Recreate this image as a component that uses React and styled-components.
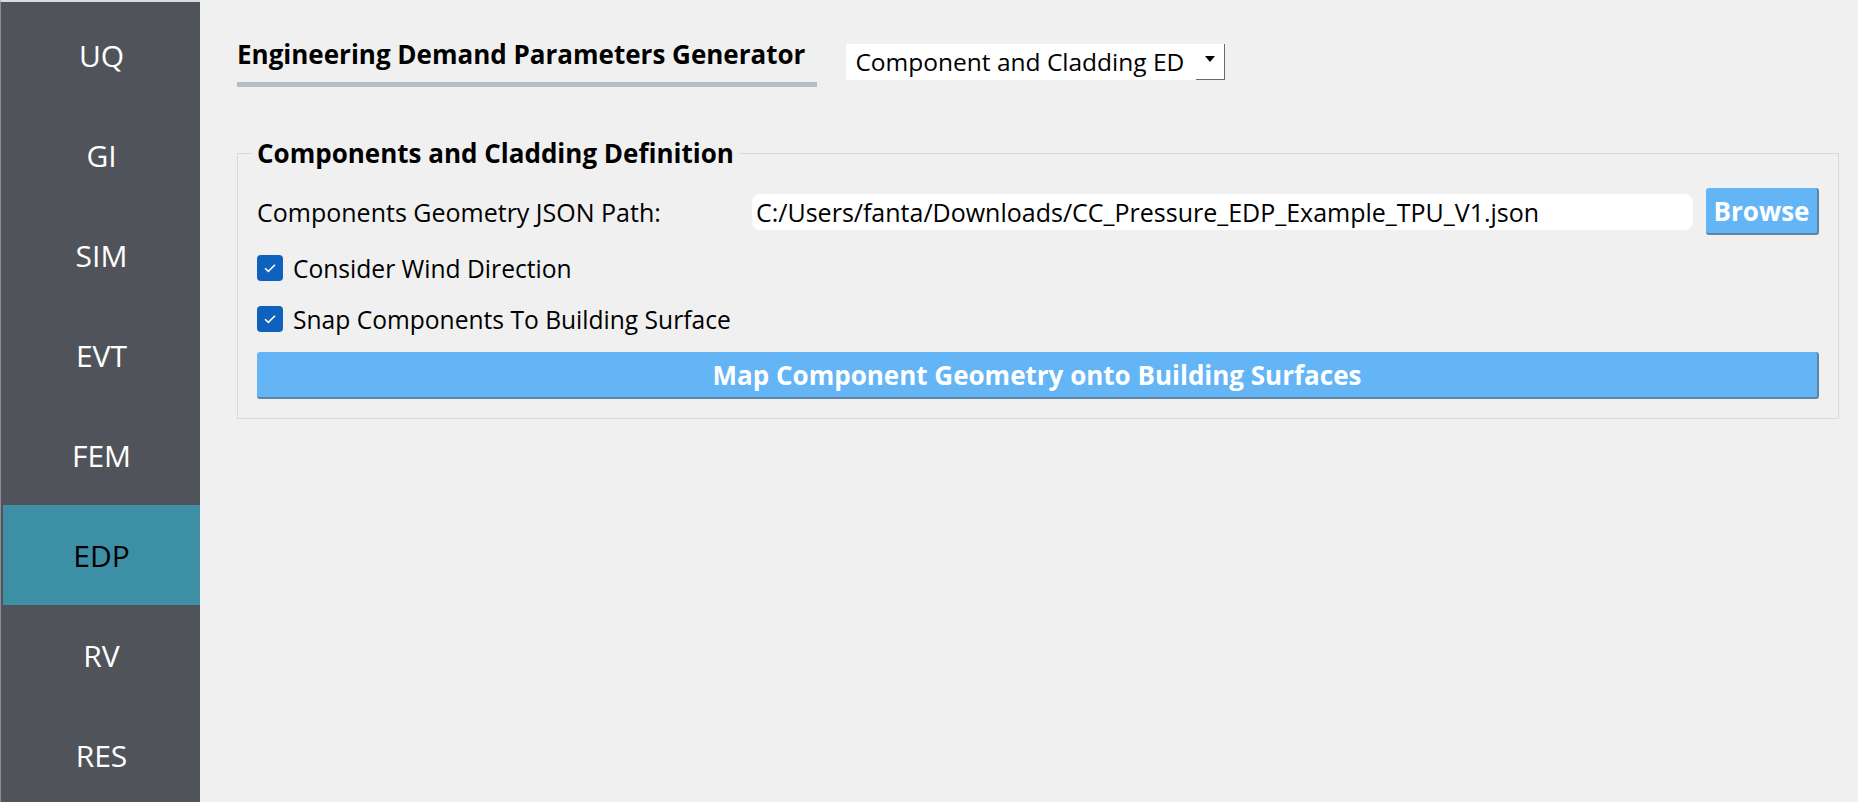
import React from "react";
import styled, { createGlobalStyle } from "styled-components";

const GlobalStyle = createGlobalStyle`
  html, body {
    margin: 0;
    padding: 0;
    background: #f0f0f0;
    font-family: "Open Sans", "Noto Sans", sans-serif;
    color: #000;
  }
`;

const Page = styled.div`
  display: flex;
  height: 100vh;
  overflow: hidden;
`;

const Sidebar = styled.nav`
  width: 200px;
  flex-shrink: 0;
  box-sizing: border-box;
  background: #50545a;
  border-top: 2px solid #dcdcdc;
  border-left: 1px solid #8c8e92;
  padding: 3px 0 0 2px;
  display: flex;
  flex-direction: column;
  overflow: hidden;
`;

const NavItem = styled.div`
  height: 100px;
  flex-shrink: 0;
  display: flex;
  align-items: center;
  justify-content: center;
  font-size: 30px;
  color: ${(p) => (p.$active ? "#000" : "#fff")};
  background: ${(p) => (p.$active ? "#3d8fa6" : "transparent")};
`;

const Main = styled.main`
  flex: 1;
  min-width: 0;
  padding: 38px 19px 0 37px;
`;

const Header = styled.div`
  display: flex;
  align-items: flex-start;
`;

const TitleTab = styled.div`
  font-size: 26px;
  font-weight: 700;
  line-height: 32px;
  padding: 0 12px 12px 0;
  border-bottom: 5px solid #b2bdc6;
  white-space: nowrap;
`;

const Combo = styled.div`
  margin: 6px 0 0 29px;
  width: 379px;
  height: 36px;
  display: flex;
  background: #fff;
`;

const ComboText = styled.div`
  flex: 1;
  overflow: hidden;
  padding: 2px 0 0 9px;
  font-size: 24.5px;
  line-height: 32px;
  white-space: nowrap;
`;

const ComboArrow = styled.div`
  width: 29px;
  box-sizing: border-box;
  border-right: 1px solid #6a6a6a;
  border-bottom: 1px solid #6a6a6a;
  display: flex;
  align-items: center;
  justify-content: center;
  padding-bottom: 6px;
`;

const Group = styled.fieldset`
  margin: 50px 0 0 0;
  min-width: 0;
  border: 1px solid #dadada;
  padding: 19px;
`;

const Legend = styled.legend`
  font-size: 26px;
  font-weight: 700;
  line-height: 32px;
  padding: 0 5px;
  margin-left: -5px;
`;

const GroupBody = styled.div`
  display: flex;
  flex-direction: column;
  gap: 15px;
`;

const PathRow = styled.div`
  display: flex;
  align-items: center;
  height: 47px;
`;

const FieldLabel = styled.div`
  width: 495px;
  flex-shrink: 0;
  font-size: 25px;
`;

const PathInput = styled.input`
  flex: 1;
  min-width: 0;
  height: 36px;
  box-sizing: border-box;
  border: none;
  border-radius: 8px;
  background: #fff;
  padding: 0 4px;
  margin-right: 13px;
  font-family: inherit;
  font-size: 25px;
  color: #000;
  outline: none;
`;

const BlueButton = styled.button`
  height: 47px;
  box-sizing: border-box;
  background: #64b5f6;
  color: #fff;
  border: none;
  border-right: 2px solid #5d86a6;
  border-bottom: 2px solid #5d86a6;
  border-radius: 3px;
  font-family: inherit;
  font-size: 26px;
  font-weight: 700;
  padding: 0 ${(p) => (p.$wide ? "0" : "6px")};
  width: ${(p) => (p.$wide ? "100%" : "113px")};
  flex-shrink: 0;
  cursor: pointer;
`;

const CheckRow = styled.label`
  display: flex;
  align-items: center;
  gap: 10px;
  height: 36px;
  font-size: 24.6px;
`;

const CheckBox = styled.span`
  width: 26px;
  height: 26px;
  border-radius: 4px;
  background: #0e62be;
  display: flex;
  align-items: center;
  justify-content: center;
`;

const navItems = ["UQ", "GI", "SIM", "EVT", "FEM", "EDP", "RV", "RES"];

const Check = () => (
  <CheckBox>
    <svg width="14" height="10" viewBox="0 0 14 10">
      <path d="M2 5.2 L5.4 8.4 L12 1.8" fill="none" stroke="#fff" strokeWidth="1.5" />
    </svg>
  </CheckBox>
);

export default function App() {
  return (
    <>
      <GlobalStyle />
      <Page>
        <Sidebar>
          {navItems.map((item) => (
            <NavItem key={item} $active={item === "EDP"}>
              {item}
            </NavItem>
          ))}
        </Sidebar>
        <Main>
          <Header>
            <TitleTab>Engineering Demand Parameters Generator</TitleTab>
            <Combo>
              <ComboText>Component and Cladding ED</ComboText>
              <ComboArrow>
                <svg width="10" height="6" viewBox="0 0 10 6">
                  <path d="M0 0 H10 L5 6 Z" fill="#000" />
                </svg>
              </ComboArrow>
            </Combo>
          </Header>
          <Group>
            <Legend>Components and Cladding Definition</Legend>
            <GroupBody>
              <PathRow>
                <FieldLabel>Components Geometry JSON Path:</FieldLabel>
                <PathInput
                  readOnly
                  value="C:/Users/fanta/Downloads/CC_Pressure_EDP_Example_TPU_V1.json"
                />
                <BlueButton>Browse</BlueButton>
              </PathRow>
              <CheckRow>
                <Check />
                Consider Wind Direction
              </CheckRow>
              <CheckRow>
                <Check />
                Snap Components To Building Surface
              </CheckRow>
              <BlueButton $wide>Map Component Geometry onto Building Surfaces</BlueButton>
            </GroupBody>
          </Group>
        </Main>
      </Page>
    </>
  );
}
